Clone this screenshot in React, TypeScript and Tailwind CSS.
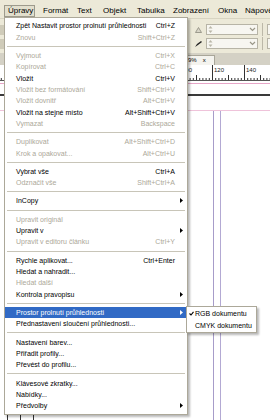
import React from 'react';

type Entry = { l: string; k?: string; d?: boolean; sub?: boolean; active?: boolean } | 'sep';

const MENU: Entry[] = [
  { l: 'Zpět Nastavit prostor prolnutí průhlednosti', k: 'Ctrl+Z' },
  { l: 'Znovu', k: 'Shift+Ctrl+Z', d: true },
  'sep',
  { l: 'Vyjmout', k: 'Ctrl+X', d: true },
  { l: 'Kopírovat', k: 'Ctrl+C', d: true },
  { l: 'Vložit', k: 'Ctrl+V' },
  { l: 'Vložit bez formátování', k: 'Shift+Ctrl+V', d: true },
  { l: 'Vložit dovnitř', k: 'Alt+Ctrl+V', d: true },
  { l: 'Vložit na stejné místo', k: 'Alt+Shift+Ctrl+V' },
  { l: 'Vymazat', k: 'Backspace', d: true },
  'sep',
  { l: 'Duplikovat', k: 'Alt+Shift+Ctrl+D', d: true },
  { l: 'Krok a opakovat...', k: 'Alt+Ctrl+U', d: true },
  'sep',
  { l: 'Vybrat vše', k: 'Ctrl+A' },
  { l: 'Odznačit vše', k: 'Shift+Ctrl+A', d: true },
  'sep',
  { l: 'InCopy', sub: true },
  'sep',
  { l: 'Upravit originál', d: true },
  { l: 'Upravit v', sub: true },
  { l: 'Upravit v editoru článku', k: 'Ctrl+Y', d: true },
  'sep',
  { l: 'Rychle aplikovat...', k: 'Ctrl+Enter' },
  { l: 'Hledat a nahradit...' },
  { l: 'Hledat další', d: true },
  { l: 'Kontrola pravopisu', sub: true },
  'sep',
  { l: 'Prostor prolnutí průhlednosti', sub: true, active: true },
  { l: 'Přednastavení sloučení průhlednosti...' },
  'sep',
  { l: 'Nastavení barev...' },
  { l: 'Přiřadit profily...' },
  { l: 'Převést do profilu...' },
  'sep',
  { l: 'Klávesové zkratky...' },
  { l: 'Nabídky...' },
  { l: 'Předvolby', sub: true },
];

const BAR: [string, number][] = [
  ['Formát', 34],
  ['Text', 26],
  ['Objekt', 34],
  ['Tabulka', 36],
  ['Zobrazení', 45],
  ['Okna', 27],
  ['Nápověda', 40],
];

const Arrow = ({ color }: { color: string }) => (
  <svg width="3" height="5" viewBox="0 0 3 5"><path d="M0 0 L3 2.5 L0 5 Z" fill={color} /></svg>
);

const Spin = () => (
  <svg width="5" height="9" viewBox="0 0 5 9">
    <path d="M0.5 3.5 L2.5 1 L4.5 3.5 Z" fill="#b9b6a8" />
    <path d="M0.5 5.5 L2.5 8 L4.5 5.5 Z" fill="#b9b6a8" />
  </svg>
);

const Chevron = () => (
  <svg width="7" height="5" viewBox="0 0 7 5">
    <path d="M1 1 L3.5 3.5 L6 1" stroke="#9a9788" strokeWidth="1.2" fill="none" />
  </svg>
);

const ToolBox = () => (
  <div className="w-[52px] h-[11px] shrink-0 border border-[#b7b4a6] bg-[#f7f6f1] flex items-center justify-between px-[1px]">
    <Spin />
    <Chevron />
  </div>
);

const Ruler = () => {
  const ticks = [];
  for (let u = -12; u <= 156; u += 2) {
    const x = 180 + (u - 100) * 1.6 + 0.5;
    const h = u % 20 === 0 ? 16 : u % 10 === 0 ? 6 : 3;
    ticks.push(<line key={u} x1={x} x2={x} y1={16 - h} y2={16} stroke="#333" strokeWidth="1" />);
  }
  return (
    <svg width="270" height="16" viewBox="0 0 270 16" className="block">
      <rect width="270" height="16" fill="#fff" />
      {ticks}
      {[100, 120, 140].map((n) => (
        <text key={n} x={180 + (n - 100) * 1.6 + 2} y="7" fontSize="6" fontFamily="Liberation Sans, sans-serif" fill="#222">
          {n}
        </text>
      ))}
      <line x1="0" x2="270" y1="15.5" y2="15.5" stroke="#555" />
    </svg>
  );
};

export default function App() {
  return (
    <div className="relative w-[270px] h-[420px] overflow-hidden bg-white font-['Liberation_Sans',Arial,sans-serif] text-black select-none">
      {/* menu bar */}
      <div className="h-[18px] bg-[#ECE9D8] flex items-start pt-[5px] pl-[4px] text-[8px] whitespace-nowrap overflow-hidden">
        <div className="h-[12px] w-[31px] shrink-0 border border-[#9d9a8c] bg-[#e2dfcd] flex items-center pl-[3px]">Úpravy</div>
        <div className="w-[8px] shrink-0" />
        {BAR.map(([t, w]) => (
          <div key={t} className="h-[12px] flex items-center shrink-0" style={{ width: w }}>{t}</div>
        ))}
      </div>

      {/* toolbar */}
      <div className="h-[35px] bg-[#ECE9D8] border-t border-[#d8d4c2] flex flex-col gap-[3px] pt-[5px]">
        {[0, 1].map((r) => (
          <div key={r} className="h-[11px] flex items-center">
            <div className="w-[4px] h-[10px] shrink-0 bg-[#cfcbb9]" />
            <div className="w-[188px] shrink-0" />
            <div className="w-[12px] shrink-0 flex justify-center">
              {r === 0 ? (
                <svg width="7" height="6" viewBox="0 0 7 6"><path d="M0.5 5.5 L6.5 5.5 L3.5 0.5 Z" fill="#d9d6c8" stroke="#8c897c" strokeWidth="0.8" /></svg>
              ) : (
                <svg width="7" height="6" viewBox="0 0 7 6"><path d="M0 6 L2 3 L6 0 L7 1 L3 4 Z" fill="#222" /></svg>
              )}
            </div>
            <div className="w-[2px] shrink-0" />
            <ToolBox />
            <div className="w-[4px] shrink-0" />
            <div className="w-px h-[13px] shrink-0 bg-[#bcb8a8]" />
            <div className="w-[4px] shrink-0" />
            <div className="w-[10px] h-[11px] shrink-0 border border-[#b7b4a6] bg-[#f7f6f1]" />
          </div>
        ))}
      </div>

      {/* tab row */}
      <div className="h-[12px] bg-[#d4d1c5] flex items-end">
        <div className="w-[186px] h-full shrink-0" />
        <div className="w-[29px] h-[10px] shrink-0 bg-[#f4f3ee] border border-b-0 border-[#a9a699] flex items-center text-[6px] pl-[1px] gap-[6px]">
          <span>9%</span>
          <span>x</span>
        </div>
      </div>

      <Ruler />

      {/* document */}
      <div className="flex flex-col">
        <div className="h-[2px]" />
        <div className="h-px bg-[#e7a6c8]" />
        <div className="h-[10px]" />
        <div className="h-[2px] bg-[#3a3a3a]" />
        <div className="h-[14px]" />
        <div className="h-px bg-[#efc3da]" />
        <div className="h-[320px] flex">
          <div className="w-[7px] shrink-0" />
          <div className="w-px shrink-0 bg-[#333]" />
          <div className="w-[12px] shrink-0" />
          <div className="w-px shrink-0 bg-[#333]" />
          <div className="w-[12px] shrink-0" />
          <div className="w-px shrink-0 bg-[#333]" />
          <div className="w-[179px] shrink-0" />
          <div className="w-px shrink-0 bg-[#a79cc9]" />
          <div className="w-[6px] shrink-0" />
          <div className="w-px shrink-0 bg-[#b3a9d3]" />
        </div>
      </div>

      {/* main dropdown menu */}
      <div className="absolute left-[4px] top-[17px] w-[184px] bg-white border border-[#aca899] shadow-[2px_2px_2px_rgba(0,0,0,0.28)] py-[2px] text-[7px] leading-none">
        {MENU.map((e, i) =>
          e === 'sep' ? (
            <div key={i} className="h-[6.8px] flex items-center mx-[2px]">
              <div className="h-px w-full bg-[#c8c5b8]" />
            </div>
          ) : (
            <div
              key={i}
              className={`h-[11.4px] flex items-center pl-[11px] whitespace-nowrap ${e.active ? 'bg-[#316AC5] text-white' : e.d ? 'text-[#aca899]' : 'text-black'}`}
            >
              <span className="flex-1">{e.l}</span>
              {e.k && <span>{e.k}</span>}
              <span className="w-[12px] flex justify-center">{e.sub && <Arrow color={e.active ? '#fff' : '#000'} />}</span>
            </div>
          )
        )}
      </div>

      {/* submenu */}
      <div className="absolute left-[186px] top-[306px] w-[71px] bg-white border border-[#aca899] shadow-[2px_2px_2px_rgba(0,0,0,0.28)] py-[1px] text-[7px] leading-none">
        {[
          { l: 'RGB dokumentu', c: true },
          { l: 'CMYK dokumentu', c: false },
        ].map((s) => (
          <div key={s.l} className="h-[11.4px] flex items-center whitespace-nowrap">
            <span className="w-[8px] flex justify-center">
              {s.c && (
                <svg width="5" height="5" viewBox="0 0 5 5"><path d="M0.5 2.5 L2 4 L4.5 0.8" stroke="#000" strokeWidth="1.1" fill="none" /></svg>
              )}
            </span>
            <span>{s.l}</span>
          </div>
        ))}
      </div>
    </div>
  );
}
